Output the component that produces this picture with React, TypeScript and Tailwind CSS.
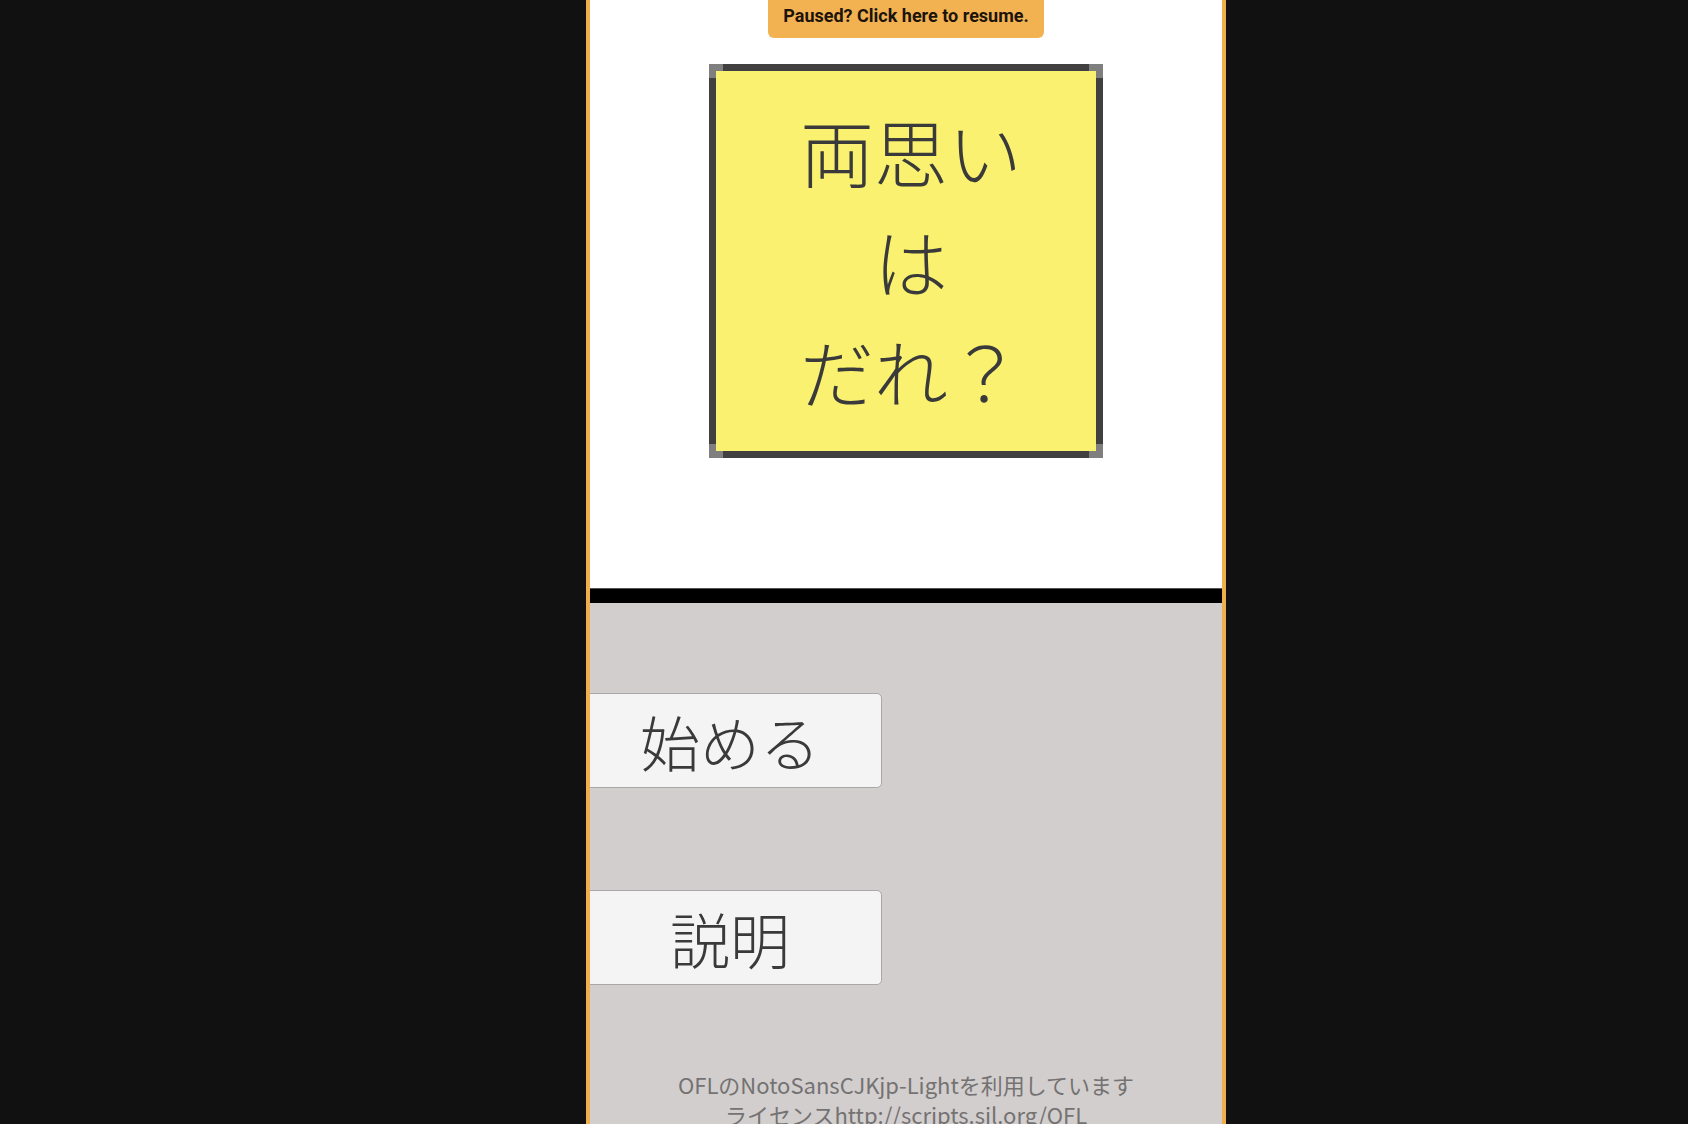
import React from "react";

const jp = { fontFamily: '"Noto Sans CJK JP", "Noto Sans", sans-serif' };

function Card() {
	return (
		<div className="relative w-[394px] h-[394px] bg-[#404040] p-[7px]">
			{/* corner squares */}
			<div className="absolute left-0 top-0 w-[14px] h-[14px] bg-[#7f7f7f]" />
			<div className="absolute right-0 top-0 w-[14px] h-[14px] bg-[#7f7f7f]" />
			<div className="absolute left-0 bottom-0 w-[14px] h-[14px] bg-[#7f7f7f]" />
			<div className="absolute right-0 bottom-0 w-[14px] h-[14px] bg-[#7f7f7f]" />
			<div
				className="relative w-full h-full bg-[#f9f16f] flex flex-col items-center justify-center pl-[10px] pb-[2px] text-[74px] leading-[110px] font-light text-[#3a3a3a]"
				style={jp}
			>
				<div>両思い</div>
				<div>は</div>
				<div>だれ？</div>
			</div>
		</div>
	);
}

function MenuButton({ label }: { label: string }) {
	return (
		<button
			className="ml-[-14px] w-[306px] h-[95px] bg-[#f4f4f4] border border-[#a8a8a8] rounded-[5px] flex items-center justify-center pl-[2px] text-[60px] font-light text-[#3a3a3a] leading-none"
			style={jp}
		>
			{label}
		</button>
	);
}

export default function App() {
	return (
		<div className="w-full h-screen bg-[#111111] overflow-hidden">
			<div className="ml-[586px] w-[640px] h-[1124px] border-x-4 border-[#f0ae4c] flex flex-col overflow-hidden">
				{/* Top area */}
				<div className="bg-white h-[588px] flex flex-col items-center shrink-0">
					<div
						className="h-[38px] px-[15px] pb-[8px] bg-[#f2b252] rounded-b-[6px] flex items-center text-[18px] font-bold text-[#1c140a]"
						style={{ fontFamily: "Roboto, 'Liberation Sans', sans-serif" }}
					>
						Paused? Click here to resume.
					</div>
					<div className="mt-[26px]">
						<Card />
					</div>
				</div>

				{/* divider */}
				<div className="h-[15px] bg-black border-t border-[#555] shrink-0" />

				{/* Menu area */}
				<div className="flex-1 bg-[#d2cecd] flex flex-col pt-[90px]">
					<MenuButton label="始める" />
					<div className="h-[102px]" />
					<MenuButton label="説明" />
					<div
						className="mt-[84px] text-center text-[22px] leading-[30px] text-[#747272]"
						style={jp}
					>
						<div>OFLのNotoSansCJKjp-Lightを利用しています</div>
						<div>ライセンスhttp://scripts.sil.org/OFL</div>
					</div>
				</div>
			</div>
		</div>
	);
}
